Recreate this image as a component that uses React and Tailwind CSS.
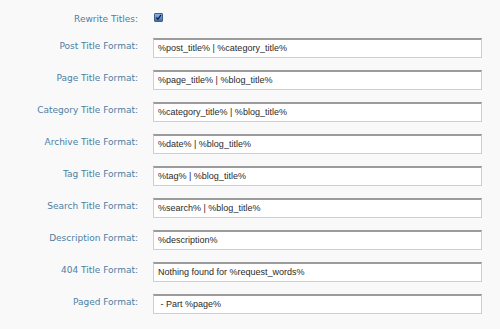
const rows = [
  ['Post Title Format:', '%post_title% | %category_title%'],
  ['Page Title Format:', '%page_title% | %blog_title%'],
  ['Category Title Format:', '%category_title% | %blog_title%'],
  ['Archive Title Format:', '%date% | %blog_title%'],
  ['Tag Title Format:', '%tag% | %blog_title%'],
  ['Search Title Format:', '%search% | %blog_title%'],
  ['Description Format:', '%description%'],
  ['404 Title Format:', 'Nothing found for %request_words%'],
  ['Paged Format:', ' - Part %page%'],
];

function Label({ children }) {
  return (
    <div className="w-[138px] shrink-0 text-right pt-[3px] text-[9px] leading-[12px] text-[#4d7fa3]">
      {children}
    </div>
  );
}

export default function App() {
  return (
    <div
      className="h-screen overflow-hidden bg-[#f9f9f9] pt-[12px]"
      style={{ fontFamily: '"DejaVu Sans", sans-serif' }}
    >
      <div className="flex h-[25px] gap-[16px]">
        <div className="w-[138px] shrink-0 text-right pt-[1px] text-[9px] leading-[12px] text-[#4d7fa3]">
          Rewrite Titles:
        </div>
        <div className="mt-[1px] w-[9px] h-[9px] rounded-[1px] border border-[#3d5f8f] bg-gradient-to-b from-[#8fb3e0] to-[#3f6fb0] flex items-center justify-center">
          <svg viewBox="0 0 10 10" className="w-[9px] h-[9px]">
            <path d="M2 5 L4.2 7.6 L8.6 1.4" fill="none" stroke="#0d1f3a" strokeWidth="1.8" />
          </svg>
        </div>
      </div>
      {rows.map(([label, value]) => (
        <div key={label} className="flex h-[32px] gap-[15px]">
          <Label>{label}</Label>
          <div className="mt-[1px] w-[329px] h-[20px] bg-white border border-[#cfcfcf] border-t-[#9b9b9b] border-t-2 flex items-center px-[4px] font-['Liberation_Sans',sans-serif] text-[9px] text-[#2a2a2a] whitespace-pre">
            {value}
          </div>
        </div>
      ))}
      <div className="flex h-[32px]">
        <Label>Use Categories for META keywords:</Label>
      </div>
    </div>
  );
}
